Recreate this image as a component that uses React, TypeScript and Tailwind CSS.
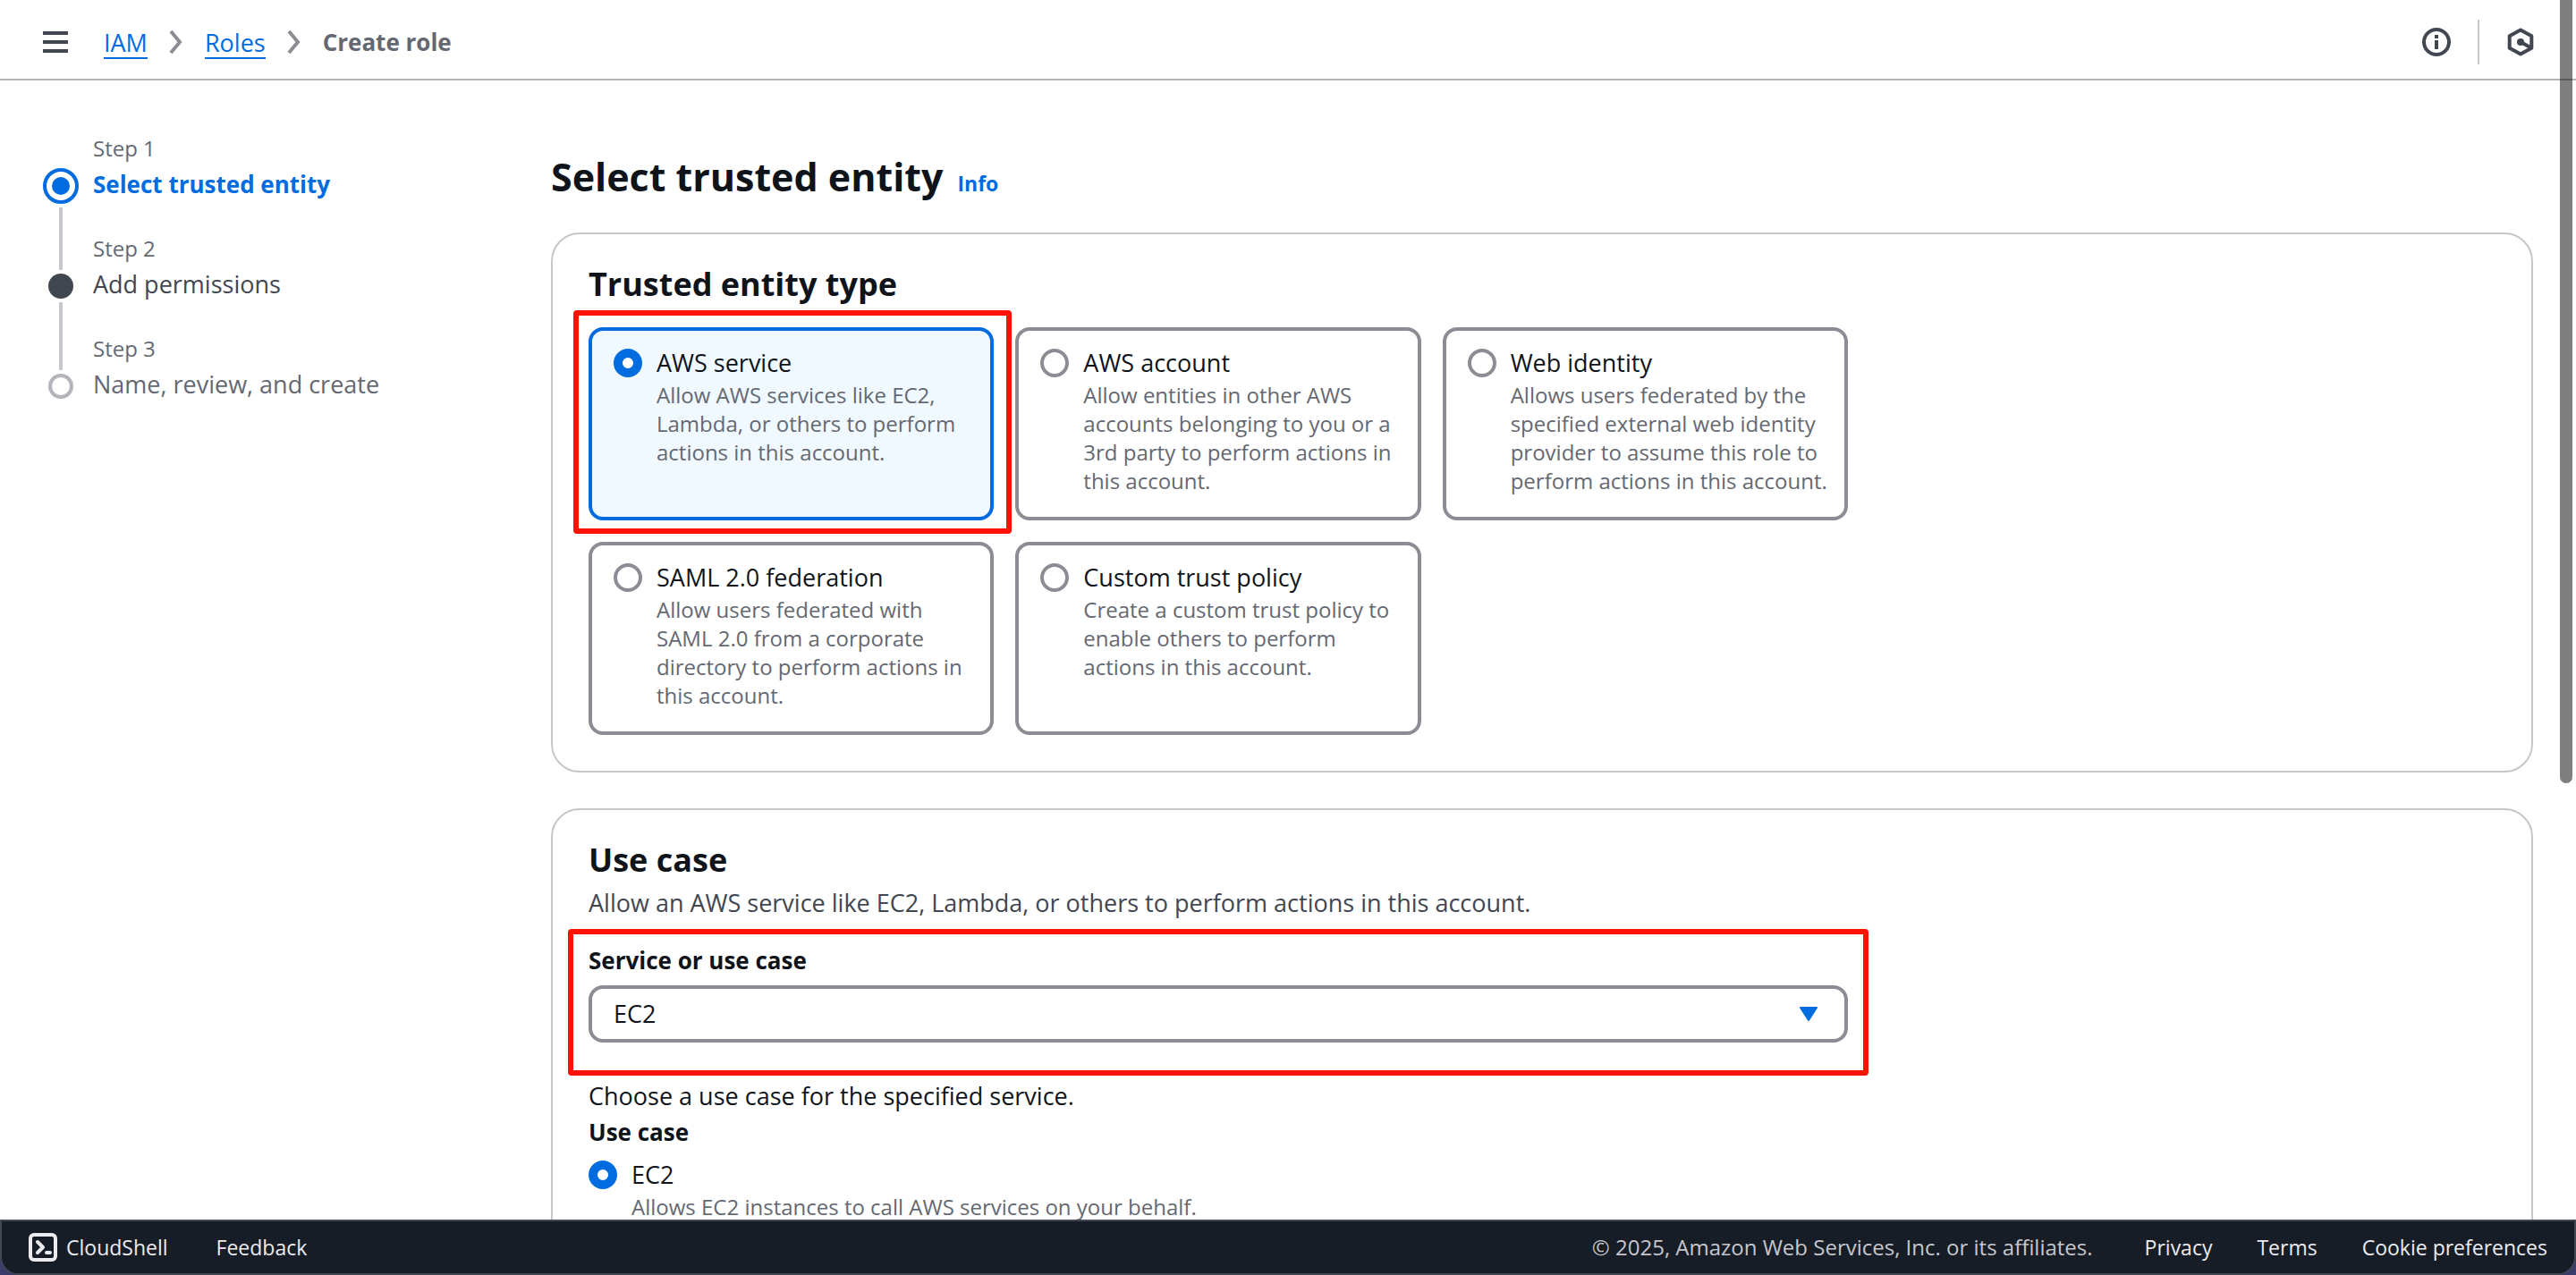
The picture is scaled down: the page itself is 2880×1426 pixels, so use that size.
import type { ReactNode } from "react";

const trustedEntities = [
  { id: "service", title: "AWS service", text: "Allow AWS services like EC2, Lambda, or others to perform actions in this account." },
  { id: "account", title: "AWS account", text: "Allow entities in other AWS accounts belonging to you or a 3rd party to perform actions in this account." },
  { id: "web", title: "Web identity", text: "Allows users federated by the specified external web identity provider to assume this role to perform actions in this account." },
  { id: "saml", title: "SAML 2.0 federation", text: "Allow users federated with SAML 2.0 from a corporate directory to perform actions in this account." },
  { id: "custom", title: "Custom trust policy", text: "Create a custom trust policy to enable others to perform actions in this account." },
];

const radioClass =
  "block size-8 shrink-0 appearance-none rounded-full border-4 border-[#8c8c94] bg-white checked:border-[10px] checked:border-[#006ce0]";

function Chevron() {
  return (
    <svg viewBox="0 0 16 28" className="h-7 w-4" fill="none" stroke="#8c8c94" strokeWidth="4" aria-hidden="true">
      <path d="M2 2l10 12L2 26" />
    </svg>
  );
}

function Header() {
  return (
    <header className="flex h-[90px] shrink-0 items-center border-b-2 border-[#b4b4bb] pr-[46px] pl-12 pt-[6px]">
      <button type="button" aria-label="Open navigation" className="flex h-7 w-7 items-center">
        <svg viewBox="0 0 28 24" className="h-6 w-7" fill="#424650" aria-hidden="true">
          <path d="M0 0h28v4H0zM0 10h28v4H0zM0 20h28v4H0z" />
        </svg>
      </button>
      <nav aria-label="Breadcrumbs" className="ml-10">
        <ol className="flex items-center gap-6">
          <li><a href="#iam" className="block border-b-2 border-[#006ce0] pt-1 text-[27px] leading-8 text-[#006ce0]">IAM</a></li>
          <li aria-hidden="true"><Chevron /></li>
          <li><a href="#roles" className="block border-b-2 border-[#006ce0] pt-1 text-[27px] leading-8 text-[#006ce0]">Roles</a></li>
          <li aria-hidden="true"><Chevron /></li>
          <li className="text-[26px] leading-9 font-bold text-[#656871]">Create role</li>
        </ol>
      </nav>
      <div className="ml-auto flex items-center gap-[30px]">
        <button type="button" aria-label="Info">
          <svg viewBox="0 0 32 32" className="size-8" fill="none" stroke="#424650" strokeWidth="4" aria-hidden="true">
            <circle cx="16" cy="16" r="14" />
            <path d="M16 8v4M16 14v10" />
          </svg>
        </button>
        <span className="h-[50px] w-0.5 bg-[#c6c6cd]" />
        <button type="button" aria-label="Amazon Q">
          <svg viewBox="0 0 32 32" className="size-8" fill="none" stroke="#424650" strokeWidth="4" strokeLinejoin="round" aria-hidden="true">
            <path d="M16 2.5L28.3 9.3V22.7L16 29.5L3.7 22.7V9.3z" />
            <circle cx="16" cy="16" r="4" fill="#424650" stroke="none" />
            <path d="M16 16l11 6" />
          </svg>
        </button>
      </div>
    </header>
  );
}

function Steps() {
  return (
    <nav aria-label="Steps" className="w-[568px] shrink-0 pt-[58px]">
      <ol>
        <li className="flex h-28 gap-4">
          <div className="flex w-10 flex-col items-center">
            <span className="mt-10 flex size-10 shrink-0 items-center justify-center rounded-full border-4 border-[#006ce0]">
              <span className="size-5 rounded-full bg-[#006ce0]" />
            </span>
            <span className="mt-1 h-[70px] w-1 shrink-0 bg-[#c6c6cd]" />
          </div>
          <div>
            <p className="text-[24px] leading-9 text-[#656871]">Step 1</p>
            <p className="text-[26px] leading-11 font-bold text-[#006ce0]">Select trusted entity</p>
          </div>
        </li>
        <li className="flex h-28 gap-4">
          <div className="flex w-10 flex-col items-center">
            <span className="mt-[46px] size-7 shrink-0 rounded-full bg-[#424650]" />
            <span className="mt-1 h-[76px] w-1 shrink-0 bg-[#c6c6cd]" />
          </div>
          <div>
            <p className="text-[24px] leading-9 text-[#656871]">Step 2</p>
            <p className="text-[27px] leading-11 text-[#424650]">Add permissions</p>
          </div>
        </li>
        <li className="flex h-28 gap-4">
          <div className="flex w-10 flex-col items-center">
            <span className="mt-[46px] size-7 shrink-0 rounded-full border-4 border-[#b4b4bb]" />
          </div>
          <div>
            <p className="text-[24px] leading-9 text-[#656871]">Step 3</p>
            <p className="text-[27px] leading-11 text-[#656871]">Name, review, and create</p>
          </div>
        </li>
      </ol>
    </nav>
  );
}

function Panel({ children }: { children: ReactNode }) {
  return <section className="rounded-[32px] border-2 border-[#c6c6cd] bg-white px-10 pb-10 text-[#0f141a]">{children}</section>;
}

function EntityCard({ id, title, text, selected }: { id: string; title: string; text: string; selected: boolean }) {
  return (
    <label
      htmlFor={id}
      className="relative flex h-[216px] gap-4 rounded-2xl border-4 border-[#8c8c94] pr-4 pl-6 has-checked:border-[#006ce0] has-checked:bg-[#f0f9ff]"
    >
      <input id={id} type="radio" name="entity" defaultChecked={selected} className={`${radioClass} mt-5`} />
      <span className="pt-4">
        <span className="block text-[27px] leading-10">{title}</span>
        <span className="block text-[24px] leading-8 text-[#656871]">{text}</span>
      </span>
      {selected && <span className="pointer-events-none absolute -top-[23px] -right-6 -bottom-[19px] -left-[21px] rounded-sm border-6 border-[#ff1100]" />}
    </label>
  );
}

function Footer() {
  return (
    <div className="shrink-0 bg-[#3b3b6e]">
      <footer className="flex h-[62px] items-center rounded-b-[20px] border-2 border-[#424650] bg-[#161d26] px-[30px] text-[23px] leading-8 text-[#ebebf0]">
        <a href="#cloudshell" className="flex items-center gap-[10px]">
          <svg viewBox="0 0 32 32" className="size-8" fill="none" stroke="#ebebf0" strokeWidth="4" strokeLinecap="round" strokeLinejoin="round" aria-hidden="true">
            <rect x="2" y="2" width="28" height="28" rx="4" />
            <path d="M10 10l6 6-6 6M20 22h4" />
          </svg>
          CloudShell
        </a>
        <a href="#feedback" className="ml-[54px]">Feedback</a>
        <div className="ml-auto flex items-center gap-[50px]">
          <span className="mr-2 text-[24px] text-[#c6c6cd]">© 2025, Amazon Web Services, Inc. or its affiliates.</span>
          <a href="#privacy">Privacy</a>
          <a href="#terms">Terms</a>
          <a href="#cookies">Cookie preferences</a>
        </div>
      </footer>
    </div>
  );
}

export default function App() {
  return (
    <div className="relative flex h-screen flex-col overflow-hidden bg-white font-['Open_Sans',sans-serif]">
      <Header />
      <div className="flex min-h-0 flex-1 overflow-hidden px-12">
        <Steps />
        <main className="min-w-0 flex-1">
          <div className="flex items-baseline gap-4 pt-[76px]">
            <h1 className="text-[43px] leading-[64px] font-bold text-[#0f141a]">Select trusted entity</h1>
            <a href="#info" className="text-[23px] font-bold text-[#006ce0]">Info</a>
          </div>
          <div className="mt-[30px] flex flex-col gap-10">
            <Panel>
              <h2 className="pt-8 text-[36px] leading-[48px] font-bold">Trusted entity type</h2>
              <div className="mt-6 grid max-w-[1408px] grid-cols-3 gap-6">
                {trustedEntities.map((entity) => (
                  <EntityCard key={entity.id} {...entity} selected={entity.id === "service"} />
                ))}
              </div>
            </Panel>
            <Panel>
              <h2 className="pt-8 text-[36px] leading-[48px] font-bold">Use case</h2>
              <p className="mt-1 text-[27px] leading-10 text-[#424650]">Allow an AWS service like EC2, Lambda, or others to perform actions in this account.</p>
              <div className="relative mt-6 max-w-[1408px]">
                <label htmlFor="service-select" className="block text-[26px] leading-10 font-bold">Service or use case</label>
                <div className="relative mt-2">
                  <select id="service-select" className="block h-16 w-full appearance-none rounded-2xl border-4 border-[#8c8c94] bg-white px-6 text-[27px] leading-10">
                    <option>EC2</option>
                  </select>
                  <svg viewBox="0 0 20 16" className="pointer-events-none absolute top-6 right-[34px] h-4 w-5" fill="#006ce0" stroke="#006ce0" strokeWidth="2" strokeLinejoin="round" aria-hidden="true">
                    <path d="M1 1h18L10 15z" />
                  </svg>
                </div>
                <span className="pointer-events-none absolute -top-[15px] -right-[23px] -bottom-[37px] -left-[23px] rounded-sm border-6 border-[#ff1100]" />
              </div>
              <p className="mt-10 text-[27px] leading-10">Choose a use case for the specified service.</p>
              <h3 className="text-[26px] leading-10 font-bold">Use case</h3>
              <div className="mt-2 flex gap-4">
                <input id="ec2-case" type="radio" name="use-case" defaultChecked className={`${radioClass} mt-1`} />
                <label htmlFor="ec2-case">
                  <span className="block text-[27px] leading-10">EC2</span>
                  <span className="block text-[24px] leading-8 text-[#656871]">Allows EC2 instances to call AWS services on your behalf.</span>
                </label>
              </div>
            </Panel>
          </div>
        </main>
      </div>
      <Footer />
      <div className="pointer-events-none absolute top-0 right-1 h-[876px] w-3.5 rounded-b-full bg-black/50" />
    </div>
  );
}
